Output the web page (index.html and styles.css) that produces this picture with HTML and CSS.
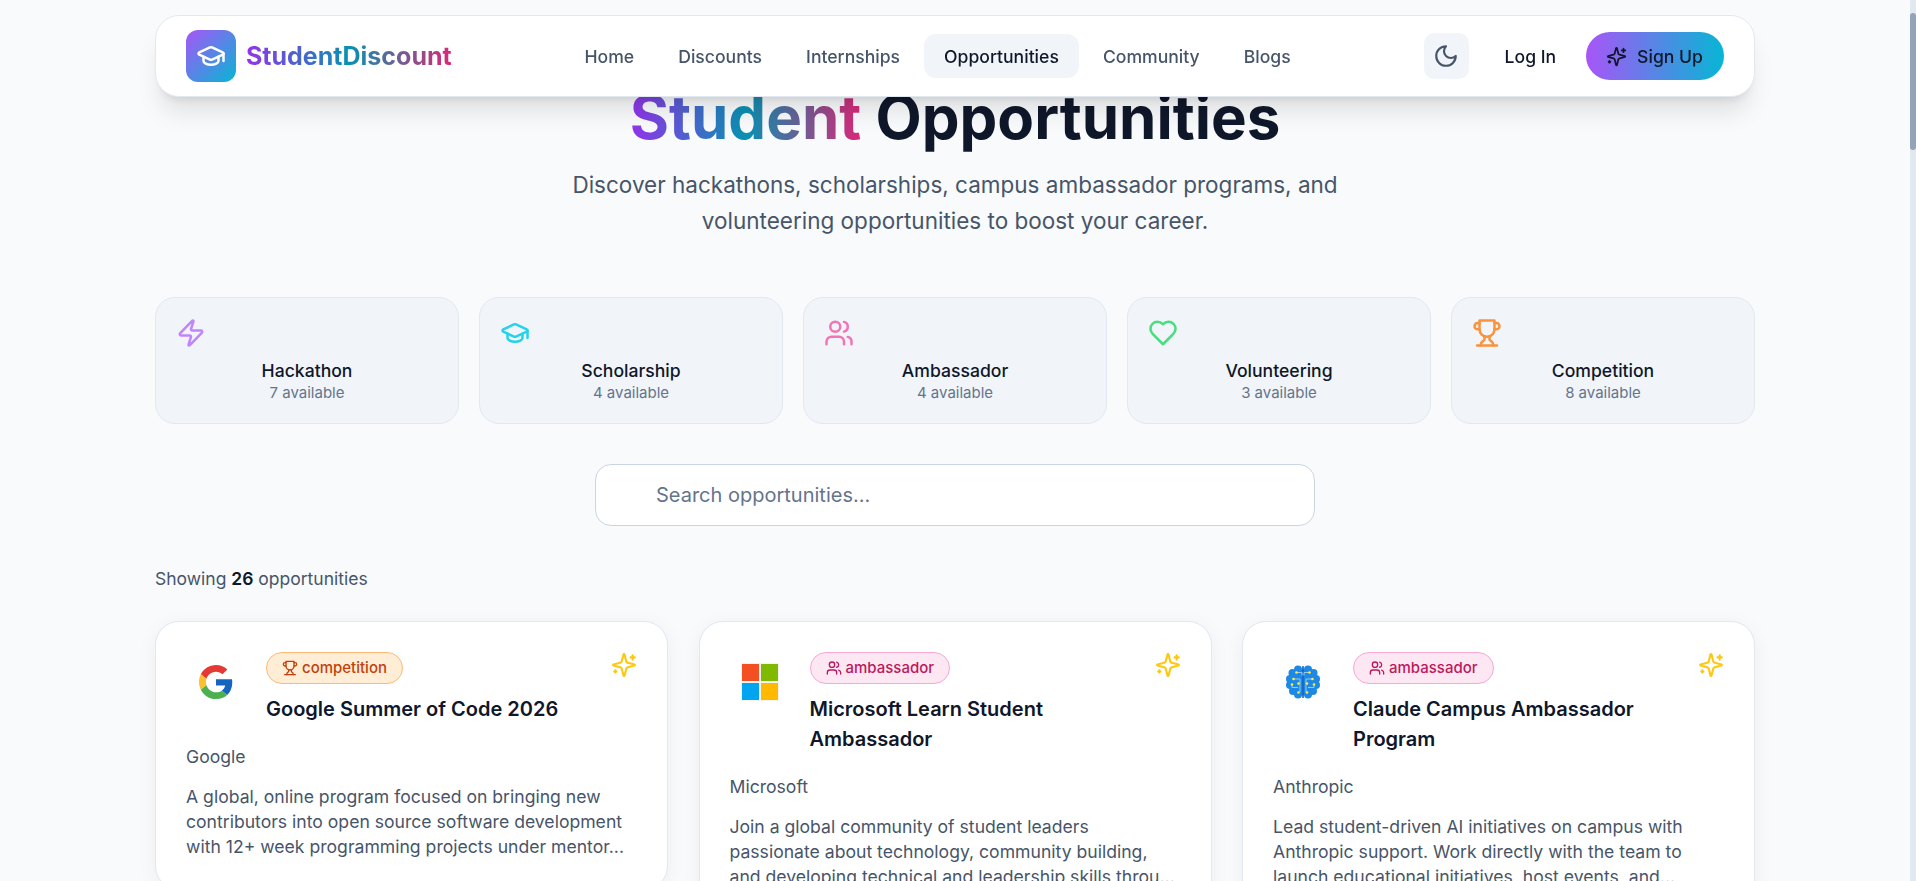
FILE: index.html
```html
<!DOCTYPE html>
<html lang="en">

<head>
    <meta charset="UTF-8">
    <meta name="viewport" content="width=device-width, initial-scale=1.0">
    <title>Student Opportunities</title>
    <link rel="stylesheet" href="styles.css">
</head>

<body>
    <svg class="defs" width="0" height="0">
        <defs>
            <symbol id="i-cap" viewBox="0 0 24 24"><path d="M21.42 10.92a1 1 0 0 0-.02-1.84L12.83 5.18a2 2 0 0 0-1.66 0L2.6 9.08a1 1 0 0 0 0 1.83l8.57 3.91a2 2 0 0 0 1.66 0z"/><path d="M22 10v6"/><path d="M6 12.5V16a6 3 0 0 0 12 0v-3.5"/></symbol>
            <symbol id="i-spark" viewBox="0 0 24 24"><path d="M9.94 15.5A2 2 0 0 0 8.5 14.06l-6.14-1.58a.5.5 0 0 1 0-.96L8.5 9.94A2 2 0 0 0 9.94 8.5l1.58-6.14a.5.5 0 0 1 .96 0L14.06 8.5A2 2 0 0 0 15.5 9.94l6.14 1.58a.5.5 0 0 1 0 .96L15.5 14.06a2 2 0 0 0-1.44 1.44l-1.58 6.14a.5.5 0 0 1-.96 0z"/><path d="M20 3v4"/><path d="M22 5h-4"/><path d="M4 17v2"/><path d="M5 18H3"/></symbol>
            <symbol id="i-users" viewBox="0 0 24 24"><path d="M16 21v-2a4 4 0 0 0-4-4H6a4 4 0 0 0-4 4v2"/><circle cx="9" cy="7" r="4"/><path d="M22 21v-2a4 4 0 0 0-3-3.87"/><path d="M16 3.13a4 4 0 0 1 0 7.75"/></symbol>
            <symbol id="i-trophy" viewBox="0 0 24 24"><path d="M6 9H4.5a2.500 2.500 0 0 1 0-5H6"/><path d="M18 9h1.500a2.500 2.500 0 0 0 0-5H18"/><path d="M4 22h16"/><path d="M10 14.660V17c0 .55-.47.98-.97 1.210C7.850 18.750 7 20.240 7 22"/><path d="M14 14.660V17c0 .55.47.98.97 1.210C16.150 18.750 17 20.240 17 22"/><path d="M18 2H6v7a6 6 0 0 0 12 0V2Z"/></symbol>
        </defs>
    </svg>

    <header class="navbar">
        <a href="#" class="brand">
            <span class="brand-mark"><svg class="icon"><use href="#i-cap"/></svg></span>
            <span class="brand-name">StudentDiscount</span>
        </a>
        <nav class="nav-links">
            <a href="#">Home</a>
            <a href="#">Discounts</a>
            <a href="#">Internships</a>
            <a href="#" class="active">Opportunities</a>
            <a href="#">Community</a>
            <a href="#">Blogs</a>
        </nav>
        <div class="nav-actions">
            <button class="theme-btn" aria-label="Toggle theme">
                <svg class="icon" viewBox="0 0 24 24"><path d="M12 3a6 6 0 0 0 9 9 9 9 0 1 1-9-9Z"/></svg>
            </button>
            <a href="#" class="login">Log In</a>
            <a href="#" class="signup"><svg class="icon"><use href="#i-spark"/></svg>Sign Up</a>
        </div>
    </header>

    <div class="scrollbar"><div class="scrollbar-thumb"></div></div>

    <main class="page">
        <section class="hero">
            <h1><span class="grad">Student</span> Opportunities</h1>
            <p>Discover hackathons, scholarships, campus ambassador programs, and volunteering opportunities to boost your career.</p>
        </section>

        <section class="stats">
            <div class="stat">
                <svg class="icon stat-icon purple" viewBox="0 0 24 24"><path d="M4 14a1 1 0 0 1-.78-1.630l9.900-10.200a.5.5 0 0 1 .86.46l-1.920 6.020A1 1 0 0 0 13 10h7a1 1 0 0 1 .78 1.630l-9.900 10.200a.5.5 0 0 1-.86-.46l1.920-6.020A1 1 0 0 0 11 14z"/></svg>
                <div class="stat-name">Hackathon</div>
                <div class="stat-count">7 available</div>
            </div>
            <div class="stat">
                <svg class="icon stat-icon cyan"><use href="#i-cap"/></svg>
                <div class="stat-name">Scholarship</div>
                <div class="stat-count">4 available</div>
            </div>
            <div class="stat">
                <svg class="icon stat-icon pink"><use href="#i-users"/></svg>
                <div class="stat-name">Ambassador</div>
                <div class="stat-count">4 available</div>
            </div>
            <div class="stat">
                <svg class="icon stat-icon green" viewBox="0 0 24 24"><path d="M19 14c1.490-1.460 3-3.210 3-5.500A5.500 5.500 0 0 0 16.500 3c-1.760 0-3 .5-4.500 2-1.500-1.500-2.740-2-4.500-2A5.500 5.500 0 0 0 2 8.500c0 2.300 1.500 4.050 3 5.500l7 7Z"/></svg>
                <div class="stat-name">Volunteering</div>
                <div class="stat-count">3 available</div>
            </div>
            <div class="stat">
                <svg class="icon stat-icon orange"><use href="#i-trophy"/></svg>
                <div class="stat-name">Competition</div>
                <div class="stat-count">8 available</div>
            </div>
        </section>

        <div class="search">
            <input type="text" placeholder="Search opportunities...">
        </div>

        <p class="showing">Showing <b>26</b> opportunities</p>

        <section class="cards">
            <article class="card">
                <div class="card-head">
                    <div class="logo">
                        <svg width="34" height="34" viewBox="0 0 48 48"><path fill="#E53935" d="M24 9.500c3.540 0 6.710 1.220 9.210 3.600l6.850-6.850C35.900 2.380 30.470 0 24 0 14.620 0 6.510 5.380 2.560 13.220l7.980 6.190C12.430 13.720 17.740 9.500 24 9.500z"/><path fill="#1565C0" d="M46.980 24.550c0-1.570-.15-3.090-.38-4.550H24v9.020h12.940c-.58 2.960-2.260 5.480-4.780 7.180l7.730 6c4.510-4.180 7.090-10.360 7.090-17.650z"/><path fill="#FBC02D" d="M10.530 28.590c-.48-1.450-.76-2.990-.76-4.590s.27-3.140.76-4.590l-7.980-6.190C.92 16.460 0 20.120 0 24c0 3.880.92 7.540 2.560 10.780l7.970-6.190z"/><path fill="#4CAF50" d="M24 48c6.480 0 11.930-2.130 15.890-5.810l-7.730-6c-2.150 1.450-4.920 2.300-8.160 2.300-6.260 0-11.570-4.220-13.470-9.910l-7.980 6.190C6.510 42.620 14.620 48 24 48z"/></svg>
                    </div>
                    <div class="card-title">
                        <span class="tag tag-orange"><svg class="icon"><use href="#i-trophy"/></svg>competition</span>
                        <h3>Google Summer of Code 2026</h3>
                    </div>
                    <svg class="icon card-spark"><use href="#i-spark"/></svg>
                </div>
                <div class="company">Google</div>
                <p class="desc">A global, online program focused on bringing new contributors into open source software development with 12+ week programming projects under mentor...</p>
            </article>

            <article class="card">
                <div class="card-head">
                    <div class="logo">
                        <div class="ms-logo"><i class="ms-red"></i><i class="ms-green"></i><i class="ms-blue"></i><i class="ms-yellow"></i></div>
                    </div>
                    <div class="card-title">
                        <span class="tag tag-pink"><svg class="icon"><use href="#i-users"/></svg>ambassador</span>
                        <h3>Microsoft Learn Student Ambassador</h3>
                    </div>
                    <svg class="icon card-spark"><use href="#i-spark"/></svg>
                </div>
                <div class="company">Microsoft</div>
                <p class="desc">Join a global community of student leaders passionate about technology, community building, and developing technical and leadership skills throu...</p>
            </article>

            <article class="card">
                <div class="card-head">
                    <div class="logo">
                        <svg width="34" height="34" viewBox="0 0 34 34">
                            <g fill="#1e88e5"><circle cx="17" cy="17" r="13.500"/><circle cx="12" cy="4.500" r="4"/><circle cx="22" cy="4.500" r="4"/><circle cx="6.500" cy="8" r="4"/><circle cx="27.500" cy="8" r="4"/><circle cx="4" cy="14" r="4"/><circle cx="30" cy="14" r="4"/><circle cx="4" cy="20" r="4"/><circle cx="30" cy="20" r="4"/><circle cx="7" cy="26" r="4"/><circle cx="27" cy="26" r="4"/><circle cx="12" cy="29.500" r="4"/><circle cx="22" cy="29.500" r="4"/></g>
                            <path fill="none" stroke="#1565c0" stroke-width="1.600" d="M17 1v32"/>
                            <path fill="none" stroke="#90caf9" d="M10.500 7.500H16v3M23.500 7.500H18v3M7.500 14H14v13M26.500 14H20v13M6 19.500v3h6M28 19.500v3h-6"/>
                            <g fill="#ffeb3b"><circle cx="10.500" cy="7.500" r="1.300"/><circle cx="23.500" cy="7.500" r="1.300"/><circle cx="7.500" cy="14" r="1.300"/><circle cx="26.500" cy="14" r="1.300"/><circle cx="6" cy="19.500" r="1.300"/><circle cx="12.500" cy="18.500" r="1.300"/><circle cx="21" cy="18.500" r="1.300"/><circle cx="28" cy="19.500" r="1.300"/><circle cx="12.500" cy="27.500" r="1.300"/><circle cx="21" cy="27.500" r="1.300"/></g>
                        </svg>
                    </div>
                    <div class="card-title">
                        <span class="tag tag-pink"><svg class="icon"><use href="#i-users"/></svg>ambassador</span>
                        <h3>Claude Campus Ambassador Program</h3>
                    </div>
                    <svg class="icon card-spark"><use href="#i-spark"/></svg>
                </div>
                <div class="company">Anthropic</div>
                <p class="desc">Lead student-driven AI initiatives on campus with Anthropic support. Work directly with the team to launch educational initiatives, host events, and...</p>
            </article>
        </section>
    </main>
</body>

</html>
```

FILE: styles.css
```css
* {
    box-sizing: border-box;
}

body {
    margin: 0;
    padding-right: 6px;
    background: #f8fafc;
    color: #0f172a;
    font-family: Inter, "Noto Sans", sans-serif;
}

a {
    text-decoration: none;
    color: inherit;
}

.defs {
    position: absolute;
}

.icon {
    fill: none;
    stroke: currentColor;
    stroke-width: 2;
    stroke-linecap: round;
    stroke-linejoin: round;
}

/* drawn scrollbar, the browser hides its own in the photo */
.scrollbar {
    position: fixed;
    top: 0;
    right: 0;
    bottom: 0;
    z-index: 20;
    width: 6px;
    padding-top: 13px;
    background: #e2e8f0;
}

.scrollbar-thumb {
    height: 137px;
    background: #94a3b8;
    border-radius: 4px;
}

/* navbar stays on top while the page scrolls */
.navbar {
    position: fixed;
    top: 15px;
    left: 155px;
    z-index: 10;
    display: flex;
    align-items: center;
    justify-content: space-between;
    width: 1600px;
    height: 82px;
    padding: 0 30px;
    background: #fff;
    border: 1px solid #e2e8f0;
    border-radius: 24px;
    box-shadow: 0 20px 25px -5px rgba(0, 0, 0, .1), 0 8px 10px -6px rgba(0, 0, 0, .1);
}

.brand {
    display: flex;
    align-items: center;
    gap: 10px;
}

.brand-mark {
    display: flex;
    align-items: center;
    justify-content: center;
    width: 50px;
    height: 52px;
    border-radius: 12px;
    background: linear-gradient(135deg, #a855f7, #06b6d4);
    color: #fff;
}

.brand-mark .icon {
    width: 30px;
    height: 30px;
}

.brand-name {
    font-size: 25px;
    font-weight: 700;
    background: linear-gradient(90deg, #9333ea, #0891b2, #db2777);
    -webkit-background-clip: text;
    background-clip: text;
    color: transparent;
}

.nav-links {
    display: flex;
    align-items: center;
    gap: 4px;
}

.nav-links a {
    padding: 12px 20px 10px;
    border-radius: 12px;
    font-size: 17.6px;
    font-weight: 500;
    line-height: 22px;
    color: #475569;
}

.nav-links a.active {
    background: #f1f5f9;
    color: #0f172a;
}

.nav-actions {
    display: flex;
    align-items: center;
}

.theme-btn {
    display: flex;
    align-items: center;
    justify-content: center;
    width: 45px;
    height: 46px;
    padding: 0;
    border: 0;
    border-radius: 10px;
    background: #f1f5f9;
    color: #475569;
}

.theme-btn .icon {
    width: 26px;
    height: 26px;
}

.login {
    margin-left: 36px;
    font-size: 17.6px;
    font-weight: 500;
}

.signup {
    display: flex;
    align-items: center;
    gap: 10px;
    height: 48px;
    margin-left: 30px;
    padding: 0 21px 0 20px;
    border-radius: 24px;
    background: linear-gradient(90deg, #a855f7, #06b6d4);
    font-size: 17.6px;
    font-weight: 500;
}

.signup .icon {
    width: 21px;
    height: 21px;
}

.page {
    width: 1600px;
    margin: 0 auto;
    padding-top: 81px;
    padding-bottom: 60px;
}

.hero {
    text-align: center;
}

.hero h1 {
    margin: 0;
    font-size: 60px;
    line-height: 72px;
    font-weight: 700;
}

.grad {
    background: linear-gradient(90deg, #9333ea, #0891b2, #db2777);
    -webkit-background-clip: text;
    background-clip: text;
    color: transparent;
}

.hero p {
    width: 800px;
    margin: 14px auto 0;
    font-size: 22.5px;
    line-height: 35.84px;
    color: #475569;
}

.stats {
    display: grid;
    grid-template-columns: repeat(5, 1fr);
    gap: 20px;
    margin-top: 58px;
}

.stat {
    height: 127px;
    padding: 20px 20px 0;
    background: #f1f5f9;
    border: 1px solid #e2e8f0;
    border-radius: 20px;
    text-align: center;
}

.stat-icon {
    display: block;
    width: 30px;
    height: 30px;
}

.purple { color: #c084fc; }
.cyan { color: #22d3ee; }
.pink { color: #f472b6; }
.green { color: #4ade80; }
.orange { color: #fb923c; }

.stat-name {
    margin-top: 11px;
    font-size: 17.6px;
    line-height: 24px;
    font-weight: 500;
}

.stat-count {
    font-size: 15px;
    line-height: 20px;
    color: #64748b;
}

.search {
    width: 720px;
    margin: 40px auto 0;
}

.search input {
    display: block;
    width: 100%;
    height: 62px;
    padding: 0 60px;
    background: #fff;
    border: 1px solid #cbd5e1;
    border-radius: 16px;
    font-family: inherit;
    font-size: 20px;
    outline: none;
}

.search input::placeholder {
    color: #64748b;
}

.showing {
    margin: 41px 0 0;
    font-size: 17.5px;
    line-height: 24px;
    color: #475569;
}

.showing b {
    font-weight: 600;
    color: #0f172a;
}

.cards {
    display: grid;
    grid-template-columns: repeat(3, 1fr);
    gap: 30.5px;
    align-items: start;
    margin-top: 30px;
}

.card {
    padding: 30px;
    background: #fff;
    border: 1px solid #e2e8f0;
    border-radius: 24px;
    box-shadow: 0 4px 20px rgba(0, 0, 0, .05);
}

.card-head {
    display: flex;
    gap: 20px;
    align-items: flex-start;
}

.logo {
    display: flex;
    align-items: center;
    justify-content: center;
    flex: none;
    width: 60px;
    height: 60px;
}

.ms-logo {
    display: grid;
    grid-template-columns: 17px 17px;
    gap: 2px;
    padding: 1px;
    background: #f3f3f3;
}

.ms-logo i {
    height: 17px;
}

.ms-red { background: #f25022; }
.ms-green { background: #7fba00; }
.ms-blue { background: #00a4ef; }
.ms-yellow { background: #ffb900; }

.card-title {
    flex: 1;
    min-width: 0;
}

.tag {
    display: inline-flex;
    align-items: center;
    gap: 4px;
    height: 32px;
    padding: 0 15px;
    border: 1px solid;
    border-radius: 16px;
    font-size: 15px;
    font-weight: 500;
}

.tag .icon {
    width: 16px;
    height: 16px;
}

.tag-orange {
    background: #ffedd5;
    border-color: #fdba74;
    color: #c2410c;
}

.tag-pink {
    background: #fce7f3;
    border-color: #f9a8d4;
    color: #be185d;
}

.card-title h3 {
    margin: 10px 0 0;
    font-size: 20px;
    line-height: 30px;
    font-weight: 600;
}

.card-spark {
    flex: none;
    width: 26px;
    height: 26px;
    color: #fcc812;
}

.company {
    margin-top: 21px;
    font-size: 17.6px;
    line-height: 24px;
    color: #475569;
}

.desc {
    margin: 15px 0 0;
    font-size: 17.6px;
    line-height: 25px;
    color: #475569;
}
```
